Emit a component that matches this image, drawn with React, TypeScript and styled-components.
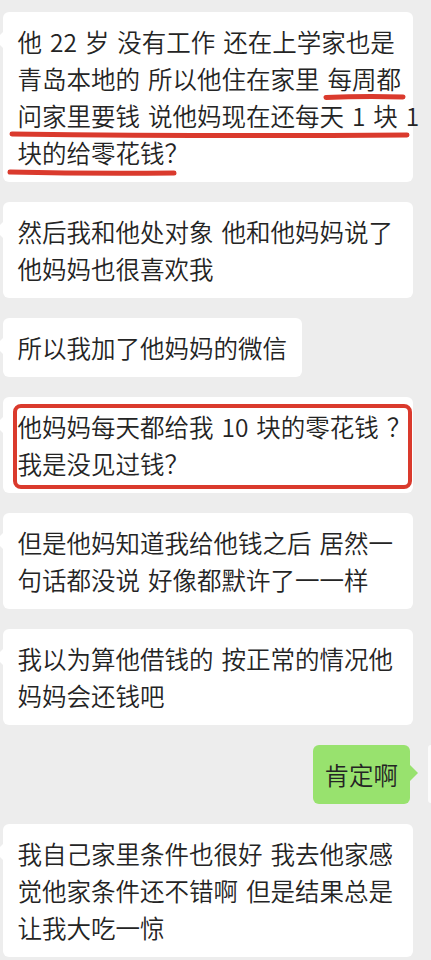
import React from "react";
import styled, { createGlobalStyle } from "styled-components";

const Global = createGlobalStyle`
  html, body {
    margin: 0;
    padding: 0;
    background: #ededed;
    overflow: hidden;
  }
  body {
    font-family: "Noto Sans CJK SC", "Noto Sans", sans-serif;
  }
`;

const Chat = styled.div`
  display: flex;
  flex-direction: column;
  gap: 20px;
  padding: 12px 0 0 3px;
  width: 431px;
  height: 960px;
  box-sizing: border-box;
  background: #ededed;
  overflow: hidden;
`;

const Row = styled.div<{ $mine?: boolean }>`
  display: flex;
  justify-content: ${(p) => (p.$mine ? "flex-end" : "flex-start")};
  align-items: flex-start;
  gap: 18px;
`;

const Bubble = styled.div<{ $wide?: boolean; $mine?: boolean }>`
  position: relative;
  box-sizing: border-box;
  width: ${(p) => (p.$wide ? "410px" : "auto")};
  padding: 11px ${(p) => (p.$mine ? "12px" : "14.5px")};
  background: ${(p) => (p.$mine ? "#98e26e" : "#ffffff")};
  border-radius: 6px;
  color: #242424;
  font-size: 24.5px;
  font-weight: 350;
  line-height: 37px;
  word-spacing: 2.5px;
  white-space: nowrap;

  &::before {
    content: "";
    position: absolute;
    top: 20px;
    ${(p) => (p.$mine ? "right: -8px;" : "left: -8px;")}
    border-top: 8px solid transparent;
    border-bottom: 8px solid transparent;
    ${(p) =>
      p.$mine
        ? "border-left: 8px solid #98e26e;"
        : "border-right: 8px solid #ffffff;"}
  }
`;

const Line = styled.div`
  display: block;
`;

const Avatar = styled.div`
  width: 3px;
  height: 58px;
  flex: none;
  background: #fbfbfb;
  border-radius: 4px 0 0 4px;
`;

const Marks = styled.svg`
  position: absolute;
  left: 0;
  top: 0;
  width: 410px;
  height: 171px;
  pointer-events: none;
  overflow: visible;
`;

const RedBox = styled.div`
  position: absolute;
  left: 10px;
  top: 7px;
  width: 399px;
  height: 85px;
  box-sizing: border-box;
  border: 4px solid #da3a2d;
  border-radius: 8px;
  pointer-events: none;
`;

const Msg: React.FC<{ lines: string[]; wide?: boolean; children?: React.ReactNode }> = ({
  lines,
  wide,
  children,
}) => (
  <Row>
    <Bubble $wide={wide}>
      {lines.map((l, i) => (
        <Line key={i}>{l}</Line>
      ))}
      {children}
    </Bubble>
  </Row>
);

export default function App() {
  return (
    <>
      <Global />
      <Chat>
        <Msg
          wide
          lines={[
            "他 22 岁 没有工作 还在上学家也是",
            "青岛本地的 所以他住在家里 每周都",
            "问家里要钱 说他妈现在还每天 1 块 1",
            "块的给零花钱？",
          ]}
        >
          <Marks viewBox="0 0 410 171">
            <path
              d="M323 85.5 Q360 84 400 85"
              stroke="#da3a2d"
              strokeWidth="5"
              strokeLinecap="round"
              fill="none"
            />
            <path
              d="M9 122 Q200 124.5 404 123"
              stroke="#da3a2d"
              strokeWidth="5"
              strokeLinecap="round"
              fill="none"
            />
            <path
              d="M7 160 Q90 162 171 161"
              stroke="#da3a2d"
              strokeWidth="5"
              strokeLinecap="round"
              fill="none"
            />
          </Marks>
        </Msg>
        <Msg wide lines={["然后我和他处对象 他和他妈妈说了", "他妈妈也很喜欢我"]} />
        <Msg lines={["所以我加了他妈妈的微信"]} />
        <Msg wide lines={["他妈妈每天都给我 10 块的零花钱 ？", "我是没见过钱？"]}>
          <RedBox />
        </Msg>
        <Msg
          wide
          lines={["但是他妈知道我给他钱之后 居然一", "句话都没说 好像都默许了一一样"]}
        />
        <Msg wide lines={["我以为算他借钱的 按正常的情况他", "妈妈会还钱吧"]} />
        <Row $mine>
          <Bubble $mine>
            <Line>肯定啊</Line>
          </Bubble>
          <Avatar />
        </Row>
        <Msg
          wide
          lines={[
            "我自己家里条件也很好 我去他家感",
            "觉他家条件还不错啊  但是结果总是",
            "让我大吃一惊",
          ]}
        />
      </Chat>
    </>
  );
}
